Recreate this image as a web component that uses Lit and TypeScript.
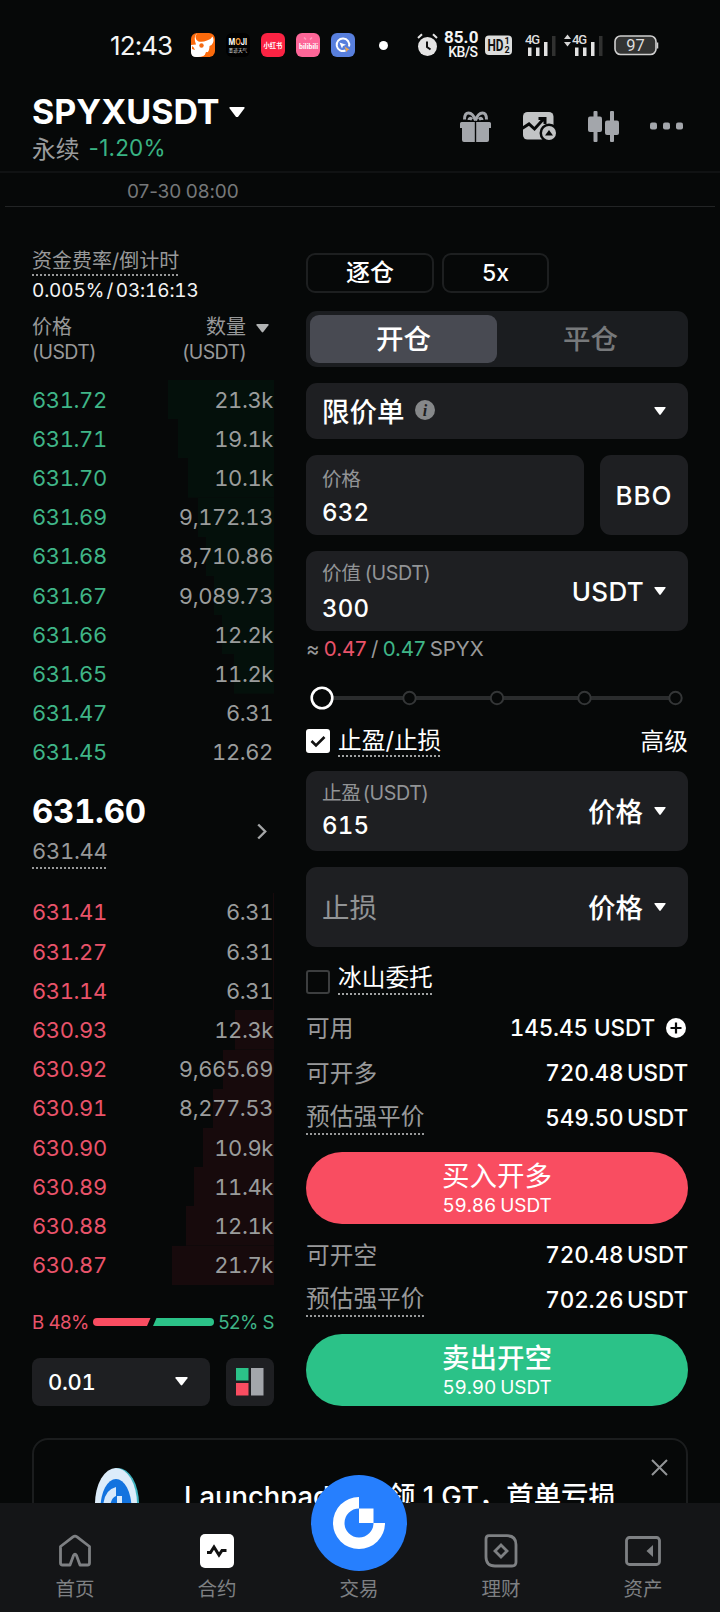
import { LitElement, html, css, svg, nothing } from "lit";
import { customElement, property } from "lit/decorators.js";
import { styleMap } from "lit/directives/style-map.js";

const shared = css`
  * { box-sizing: border-box; }
  svg { display: block; flex: none; }
  .row { display: flex; align-items: center; }
  .between { display: flex; align-items: center; justify-content: space-between; }
  .dotted {
    padding-bottom: 2px;
    background: repeating-linear-gradient(90deg, currentColor 0 2px, transparent 2px 4px) left bottom / 100% 2px no-repeat;
  }
`;

const caret = (w = 12, color = "#fff") => html`<svg width=${w} height=${w * 0.68} viewBox="0 0 12 8">
  <path d="M1 0h10q1.200 0 .5 1L6.700 7.400q-.7.8-1.400 0L.5 1Q-.2 0 1 0z" fill=${color} /></svg>`;

type Level = { price: string; qty: string; depth: number };

const asks: Level[] = [
  { price: "631.72", qty: "21.3k", depth: 106 },
  { price: "631.71", qty: "19.1k", depth: 96 },
  { price: "631.70", qty: "10.1k", depth: 86 },
  { price: "631.69", qty: "9,172.13", depth: 76 },
  { price: "631.68", qty: "8,710.86", depth: 68 },
  { price: "631.67", qty: "9,089.73", depth: 60 },
  { price: "631.66", qty: "12.2k", depth: 52 },
  { price: "631.65", qty: "11.2k", depth: 40 },
  { price: "631.47", qty: "6.31", depth: 0 },
  { price: "631.45", qty: "12.62", depth: 0 },
];

const bids: Level[] = [
  { price: "631.41", qty: "6.31", depth: 1 },
  { price: "631.27", qty: "6.31", depth: 1 },
  { price: "631.14", qty: "6.31", depth: 1 },
  { price: "630.93", qty: "12.3k", depth: 39 },
  { price: "630.92", qty: "9,665.69", depth: 51 },
  { price: "630.91", qty: "8,277.53", depth: 61 },
  { price: "630.90", qty: "10.9k", depth: 71 },
  { price: "630.89", qty: "11.4k", depth: 80 },
  { price: "630.88", qty: "12.1k", depth: 88 },
  { price: "630.87", qty: "21.7k", depth: 102 },
];

@customElement("status-bar")
class StatusBar extends LitElement {
  static styles = [shared, css`
    :host { display: flex; align-items: center; height: 90px; padding-left: 110px; color: #f4f4f4; font-family: Roboto, "Noto Sans CJK SC", sans-serif; }
    .time { width: 81px; font-size: 26px; font-weight: 400; letter-spacing: -0.900px; font-family: Inter, sans-serif; }
    .apps { display: flex; gap: 11px; width: 187.500px; flex: none; }
    .dot { width: 9px; height: 9px; border-radius: 50%; background: #fff; margin-right: 29px; flex: none; }
    .speed { width: 35px; margin-left: 6px; flex: none; display: flex; flex-direction: column; align-items: flex-end; font-size: 17px; line-height: 13.500px; font-weight: 700; white-space: nowrap; letter-spacing: 0.100px; }
    .speed b { font-size: 14px; line-height: 14px; font-weight: 500; letter-spacing: -0.600px; padding-right: 1px; }
    .hd { margin-left: 6px; }
    .sig { margin-left: 12px; }
    .sig2 { margin-left: 7px; }
    .bat { margin-left: 10px; }
  `];
  render() {
    return html`
      <span class="time">12:43</span>
      <div class="apps">
        <svg width="24" height="24"><rect width="24" height="24" rx="6" fill="#fb6a0c"/><path d="M6 0Q2.500 6 7.500 8.500q4 1 8.500-1 4-1 5.500-4Q24 8 20.500 12l-2 1q0 5-2.500 7-3 4-9 4H5q-5 0-5-5v-7l5-.5Q2 4 6 0z" fill="#fff"/><circle cx="10.500" cy="12.500" r="2.200" fill="#f46a12"/><path d="M1 13q2 1 3 4l-3-1zM15 19q4 0 4 5h-6z" fill="#fb6a0c"/></svg>
        <svg width="24" height="24"><rect width="24" height="24" rx="6" fill="#000"/><text x="2.500" y="12" font-size="8.500" font-weight="700" fill="#fff" font-family="Inter" textLength="18.500" lengthAdjust="spacingAndGlyphs">M<tspan fill="#f49b3b">O</tspan>JI</text><text x="2.500" y="18.500" font-size="4.700" fill="#ddd" font-family="Noto Sans CJK SC">墨迹天气</text></svg>
        <svg width="24" height="24"><rect width="24" height="24" rx="6" fill="#fb2343"/><text x="2.500" y="14.500" font-size="6.300" font-weight="700" fill="#fff" font-family="Noto Sans CJK SC">小红书</text></svg>
        <svg width="24" height="24"><rect width="24" height="24" rx="6" fill="#fd6698"/><path d="M8 4.500l2 2M16 4.500l-2 2" stroke="#ff9dbd" stroke-width="1.500"/><text x="3" y="15.500" font-size="7" font-weight="700" fill="#fff" font-family="Roboto">bilibili</text></svg>
        <svg width="24" height="24"><rect width="24" height="24" rx="6" fill="#587fdd"/><path d="M14.500 17.500a6.300 6.300 0 113.500-4" fill="none" stroke="#fff" stroke-width="2"/><path d="M8.500 9.500l6.500 2.200-3 1.300-1 2.500z" fill="#fff"/><path d="M13.500 13.500l5 3-2 .8-.8 2z" fill="#eda651"/></svg>
      </div>
      <i class="dot"></i>
      <svg width="21" height="24" viewBox="0 0 21 24"><circle cx="10.500" cy="13.500" r="9.500" fill="#e4e4e4"/><path d="M1 5l4-3.800M20 5l-4-3.800" stroke="#e4e4e4" stroke-width="2"/><path d="M10 8.500v5.500l3.500 2.500" fill="none" stroke="#111" stroke-width="2"/></svg>
      <span class="speed">85.0<b>KB/S</b></span>
      <svg class="hd" width="28" height="20"><rect width="27" height="19.500" y=".5" rx="4" fill="#dcdddc"/><text x="2.500" y="16" font-size="16" font-weight="700" textLength="16" lengthAdjust="spacingAndGlyphs" fill="#111" font-family="Roboto">HD</text><text x="19.500" y="9.300" font-size="9" font-weight="700" fill="#111" font-family="Roboto">1</text><text x="19.500" y="18.200" font-size="9" font-weight="700" fill="#111" font-family="Roboto">2</text></svg>
      ${[0, 1].map((i) => html`<svg class=${i ? "sig2" : "sig"} width=${i ? 40 : 32} height="24" viewBox="${i ? -8 : 0} 0 ${i ? 40 : 32} 24">
        ${i ? svg`<path d="M-8 6l3.500-4.500L-1 6zM-8 9l3.500 4.500L-1 9z" fill="#d4d4d4"/>` : nothing}
        <text x="0" y="11" font-size="13" font-weight="500" fill="#ddd" font-family="Roboto" textLength="15">4G</text>
        <path d="M3 14.500h3.500V23H3zM11 14.500h3.500V23H11zM19 9h3.500v14H19z" fill="#e2e2e2"/><path d="M27 3h3.500v20H27z" fill="#303130"/></svg>`)}
      <svg class="bat" width="45" height="21"><rect x="1" y="1" width="41" height="18.500" rx="5.500" fill="#333433" stroke="#d0d0d0" stroke-width="1.600"/><path d="M43.500 7.500v6" stroke="#d0d0d0" stroke-width="1.500"/><text x="21.500" y="16" text-anchor="middle" font-size="16.500" fill="#ddd" font-family="Roboto">97</text></svg>
    `;
  }
}

@customElement("pair-header")
class PairHeader extends LitElement {
  static styles = [shared, css`
    :host { display: flex; justify-content: space-between; height: 83px; padding: 3px 37px 0 32px; border-bottom: 2px solid #101213; }
    .name { height: 38px; gap: 9px; font-size: 34px; line-height: 38px; font-weight: 700; color: #fff; }
    .sub { height: 32px; gap: 9px; font-size: 23.800px; color: #9a9c9d; }
    .chg { color: #39b383; font-size: 22.500px; letter-spacing: 0.200px; }
    .tools { display: flex; gap: 31px; align-items: center; height: 66px; }
  `];
  render() {
    return html`
      <div>
        <div class="row name">SPYXUSDT ${caret(16)}</div>
        <div class="row sub">永续 <span class="chg">-1.20%</span></div>
      </div>
      <div class="tools">
        <svg width="31" height="31" viewBox="0 0 31 31" fill="#a3a6ab"><path d="M1.500 11h28q1.500 0 1.500 1.500V17h-2v12q0 2-2 2H4q-2 0-2-2V17H0v-4.500Q0 11 1.500 11z"/><path d="M14.800 11h1.400v20h-1.400z" fill="#060808"/><path d="M15.500 9.500Q13 2 8.500 2 4.500 2 4.500 8.500M15.500 9.500Q18 2 22.500 2q4 0 4 6.500M9 9q0-3 3-.5M22 9q0-3-3-.5" fill="none" stroke="#a3a6ab" stroke-width="3"/></svg>
        <svg width="35" height="30" viewBox="0 0 35 30"><rect width="30.500" height="27.500" x="1" y="1" rx="4.500" fill="#c2c4c5"/><path d="M0 17.500l7-4.500 5.500 5L22 7.500m-5.500 0h6.500V13" fill="none" stroke="#060808" stroke-width="3"/><circle cx="27" cy="22" r="9.500" fill="#060808"/><circle cx="27" cy="22" r="7" fill="#c2c4c5"/><path d="M23 24.500l4-5.500 4 5.500z" fill="#060808"/></svg>
        <svg width="31" height="31" viewBox="0 0 31 31" fill="#a3a6ab"><rect x="5.500" width="4" height="31" rx="1"/><rect y="5.500" width="14" height="15.500" rx="2"/><rect x="22" width="4" height="31" rx="1"/><rect x="17" y="9.500" width="14" height="14.500" rx="2"/></svg>
        <svg width="33" height="8" viewBox="0 0 33 8" fill="#a3a6ab"><rect y=".5" width="7" height="7" rx="2"/><rect x="13" y=".5" width="7" height="7" rx="2"/><rect x="26" y=".5" width="7" height="7" rx="2"/></svg>
      </div>`;
  }
}

@customElement("order-book")
class OrderBook extends LitElement {
  static styles = [shared, css`
    :host { display: block; width: 242px; color: #98999a; }
    .funding { width: max-content; height: 28px; font-size: 20px; line-height: 26px; }
    .rate { height: 29px; line-height: 29px; font-size: 19px; color: #f4f4f4; letter-spacing: -0.150px; word-spacing: -2.500px; font-variant-numeric: tabular-nums; white-space: nowrap; }
    .heads { height: 75px; padding-top: 10px; font-size: 20px; align-items: flex-start; }
    .heads div { line-height: 25px; }
    .heads small { display: block; font-size: 19.500px; letter-spacing: -0.600px; }
    .qh { text-align: right; padding-right: 28px; }
    .qt { position: relative; }
    .qt svg { position: absolute; left: 100%; top: 9px; margin-left: 10px; }
    .levels { display: grid; grid-auto-rows: 39.200px; font-size: 22px; font-variant-numeric: tabular-nums; }
    .level { display: grid; grid-template-columns: 1fr auto; align-items: center; padding-right: 1px; letter-spacing: -0.400px; background: linear-gradient(var(--tint), var(--tint)) right / var(--depth, 0) 100% no-repeat; }
    .ask { color: #3fb587; --tint: #04100b; }
    .bid { color: #e9536a; --tint: #170a0c; }
    .qty { color: #9a9c9c; }
    .mid { height: 121px; padding: 20px 7px 0 0; align-items: flex-start; }
    .last { font-size: 33px; line-height: 38px; font-weight: 700; color: #fff; font-variant-numeric: tabular-nums; letter-spacing: -0.300px; }
    .mark { width: max-content; margin-top: 3px; height: 36px; font-size: 22px; line-height: 36px; font-variant-numeric: tabular-nums; letter-spacing: -0.300px; }
    .arrow { margin-top: 31px; }
    .ratio { height: 73px; padding-top: 2px; justify-content: space-between; font-size: 18.700px; letter-spacing: -0.500px; white-space: nowrap; }
    .b { color: #e9536a; } .s { color: #3fb587; }
    .tools { display: flex; gap: 16px; height: 48px; }
    .step { flex: 1; border-radius: 8px; background: #1e1f22; padding: 0 22px 0 16px; color: #fff; font-size: 22px; font-weight: 500; font-variant-numeric: tabular-nums; letter-spacing: -0.300px; }
    .layout { width: 48px; border-radius: 8px; background: #1e1f22; display: grid; place-items: center; }
  `];
  private levels(rows: Level[], side: string) {
    return html`<div class="levels">${rows.map((l) => html`
      <div class="level ${side}" style=${styleMap({ "--depth": `${l.depth}px` })}><span>${l.price}</span><span class="qty">${l.qty}</span></div>`)}</div>`;
  }
  render() {
    return html`
      <div class="funding dotted">资金费率/倒计时</div>
      <div class="rate">0.005% / 03:16:13</div>
      <div class="between heads">
        <div>价格<small>(USDT)</small></div>
        <div class="qh"><span class="qt">数量${caret(13, "#b0b2b3")}</span><small>(USDT)</small></div>
      </div>
      ${this.levels(asks, "ask")}
      <div class="between mid">
        <div><div class="last">631.60</div><div class="mark dotted">631.44</div></div>
        <svg class="arrow" width="10" height="17" viewBox="0 0 10 17"><path d="M1.200 1.500l7 7-7 7" fill="none" stroke="#a4a6a7" stroke-width="2.400"/></svg>
      </div>
      ${this.levels(bids, "bid")}
      <div class="row ratio">
        <span class="b">B 48%</span>
        <svg width="121" height="8" viewBox="0 0 121 8"><path d="M4 0h53.500L54 8H4a4 4 0 010-8z" fill="#f94d61"/><path d="M63.500 0H117a4 4 0 010 8H60z" fill="#2bc288"/></svg>
        <span class="s">52% S</span>
      </div>
      <div class="tools">
        <div class="between step">0.01 ${caret(13)}</div>
        <div class="layout"><svg width="28" height="28"><rect width="12.500" height="12.500" fill="#2bc288"/><rect y="15" width="12.500" height="12.500" fill="#f94d61"/><rect x="15" width="12.500" height="27.500" fill="#a3a6ab"/></svg></div>
      </div>`;
  }
}

@customElement("order-field")
class OrderField extends LitElement {
  @property() label = "";
  @property() value = "";
  @property() hint = "";
  @property() unit = "";
  @property({ type: Number }) gap = 0;
  static styles = [shared, css`
    :host { display: flex; align-items: center; justify-content: space-between; height: 80px; border-radius: 11px; background: #1e1f22; padding: 0 22px 0 16px; color: #fff; }
    :host([lower]) .text { padding-top: 3px; }
    :host([upper]) .text { padding-bottom: 2px; }
    :host([upper]) .label { word-spacing: -3px; }
    .label { font-size: 19.700px; line-height: 26px; color: #929496; letter-spacing: -0.400px; word-spacing: -1px; }
    .value { font-size: 24px; line-height: 28px; font-weight: 500; font-variant-numeric: tabular-nums; letter-spacing: 0.200px; }
    .hint { font-size: 27.500px; color: #929496; padding-bottom: 2px; }
    .unit { gap: 10px; font-size: 26px; font-weight: 500; letter-spacing: 0.300px; padding-top: 1px; }
    .cjk { font-size: 27.500px; letter-spacing: 0; gap: 11px; padding: 0 0 2px; }
    .cjk svg { margin-top: 3px; }
  `];
  render() {
    return html`
      ${this.hint ? html`<div class="hint">${this.hint}</div>`
        : html`<div class="text"><div class="label">${this.label}</div><div class="value" style=${styleMap({ "margin-top": `${this.gap}px` })}>${this.value}</div></div>`}
      ${this.unit ? html`<div class="row unit ${this.unit === "USDT" ? "" : "cjk"}">${this.unit} ${caret(12)}</div>` : nothing}`;
  }
}

@customElement("order-form")
class OrderForm extends LitElement {
  static styles = [shared, css`
    :host { display: block; flex: 1; color: #fff; }
    .modes { display: flex; gap: 8px; }
    .mode { height: 40px; width: 128px; border: 2px solid #1d1f20; border-radius: 9px; display: grid; place-items: center; font-size: 24px; font-weight: 500; line-height: 30px; }
    .lev { width: 107px; font-size: 23px; }
    .tabs { display: grid; grid-template-columns: 187px 1fr; margin-top: 18px; height: 56px; padding: 4px; border-radius: 11px; background: #1b1d20; text-align: center; font-size: 27.500px; line-height: 49px; font-weight: 500; color: #77797b; }
    .on { background: #484a52; border-radius: 9px; color: #fff; height: 48px; }
    .type { margin-top: 16px; height: 56px; border-radius: 11px; background: #1e1f22; padding: 0 22px 0 16px; font-size: 27.500px; font-weight: 500; }
    .type .row { gap: 10px; padding-bottom: 2px; }
    .type > svg { margin-top: 1px; }
    .price { display: grid; grid-template-columns: 278px 88px; gap: 16px; margin-top: 16px; }
    .bbo { border-radius: 11px; background: #1e1f22; display: grid; place-items: center; font-size: 26px; font-weight: 500; letter-spacing: 0.900px; padding-top: 1px; }
    .mt { margin-top: 16px; }
    .est { height: 36px; font-size: 20.500px; line-height: 36px; color: #98999a; letter-spacing: -0.100px; word-spacing: -1.300px; }
    .r { color: #e9536a; } .g { color: #3fb587; }
    .slider { padding: 18px 0 0 4px; }
    .check { height: 60px; font-size: 23.700px; line-height: 33px; align-items: flex-start; padding-top: 14px; }
    .check .row { gap: 8px; align-items: flex-start; }
    .check .dotted { color: #fff; padding-bottom: 0; height: 32px; line-height: 32px; background-image: repeating-linear-gradient(90deg, #a0a2a3 0 2px, transparent 2px 4px); }
    .check svg, .box { margin-top: 4px; }
    .box { width: 24px; height: 24px; border: 2px solid #3c3e3f; border-radius: 3px; }
    .ice { height: 58px; padding-top: 16px; }
    .ice .dotted { line-height: 30px; }
    .ice .box { margin-top: 7px; }
    .info { height: 45px; font-size: 22.500px; font-weight: 500; font-variant-numeric: tabular-nums; word-spacing: -2.500px; letter-spacing: -0.100px; }
    .info > span:first-child { color: #98999a; font-size: 23.700px; font-weight: 400; letter-spacing: 0; padding-bottom: 2px; }
    .info .dotted { height: 34px; line-height: 32px; margin-top: 1px; }
    .avail { word-spacing: 0; }
    .avail div { gap: 11px; }
    .avail svg { margin-right: 2px; }
    .cta { height: 72px; border-radius: 36px; display: flex; flex-direction: column; align-items: center; font-size: 27.500px; line-height: 34px; padding-top: 7px; }
    .cta small { font-size: 19px; line-height: 25px; font-variant-numeric: tabular-nums; letter-spacing: -0.100px; word-spacing: -1px; }
    .buy { background: #f94d61; margin: 12px 0 8px; }
    .sell { background: #2bc288; margin-top: 12px; font-weight: 500; }
    .sell small { font-weight: 400; }
  `];
  private info(label: string, value: string, dotted = false) {
    return html`<div class="between info"><span class=${dotted ? "dotted" : ""}>${label}</span><span>${value}</span></div>`;
  }
  render() {
    return html`
      <div class="modes"><div class="mode">逐仓</div><div class="mode lev">5x</div></div>
      <div class="tabs"><div class="on">开仓</div><div>平仓</div></div>
      <div class="between type"><div class="row">限价单 <svg width="20" height="20"><circle cx="10" cy="10" r="10" fill="#86888a"/><text x="10" y="15.500" text-anchor="middle" font-family="Liberation Serif" font-style="italic" font-weight="700" font-size="16" fill="#1e1f22">i</text></svg></div>${caret(12)}</div>
      <div class="price"><order-field lower label="价格" value="632" .gap=${7}></order-field><div class="bbo">BBO</div></div>
      <order-field class="mt" label="价值 (USDT)" value="300" unit="USDT" .gap=${9}></order-field>
      <div class="est">≈ <span class="r">0.47</span> / <span class="g">0.47</span> SPYX</div>
      <svg class="slider" width="382" height="44" viewBox="0 0 378 26">
        <path d="M22 13H360" stroke="#2a2c2d" stroke-width="4"/>
        ${[99.5, 187, 274.5, 365.5].map((cx) => svg`<circle cx=${cx} cy="13" r="6.200" fill="#060808" stroke="#343637" stroke-width="2"/>`)}
        <circle cx="12" cy="13" r="10.300" fill="#060808" stroke="#fff" stroke-width="2.600"/>
      </svg>
      <div class="between check">
        <div class="row"><svg width="24" height="24"><rect width="24" height="24" rx="3" fill="#fff"/><path d="M5.500 12l4.500 4.500 8.500-8.500" fill="none" stroke="#111" stroke-width="2.600"/></svg><span class="dotted">止盈/止损</span></div>
        <span>高级</span>
      </div>
      <order-field upper label="止盈 (USDT)" value="615" unit="价格" .gap=${6}></order-field>
      <order-field class="mt" hint="止损" unit="价格"></order-field>
      <div class="check ice"><div class="row"><div class="box"></div><span class="dotted">冰山委托</span></div></div>
      <div class="between info avail"><span>可用</span><div class="row">145.45 USDT <svg width="20" height="20"><circle cx="10" cy="10" r="10" fill="#fff"/><path d="M10 4.500v11M4.500 10h11" stroke="#08090a" stroke-width="2.200"/></svg></div></div>
      ${this.info("可开多", "720.48 USDT")}
      ${this.info("预估强平价", "549.50 USDT", true)}
      <div class="cta buy">买入开多<small>59.86 USDT</small></div>
      ${this.info("可开空", "720.48 USDT")}
      ${this.info("预估强平价", "702.26 USDT", true)}
      <div class="cta sell">卖出开空<small>59.90 USDT</small></div>`;
  }
}

@customElement("promo-banner")
class PromoBanner extends LitElement {
  static styles = [shared, css`
    :host { display: grid; grid-template-columns: 62px auto 1fr; height: 110px; margin: 32px 32px 0; border: 2px solid #1b1d1e; border-radius: 16px; color: #fff; padding: 0 18px 0 61px; }
    .coin { margin-top: 28px; }
    .msg { padding: 38px 0 0 27px; font-size: 27.400px; line-height: 36px; font-weight: 500; white-space: nowrap; }
    .gt { margin-left: 58px; }
    .x { justify-self: end; margin-top: 19px; }
  `];
  render() {
    return html`
      <svg class="coin" width="44" height="72" viewBox="0 0 44 72"><ellipse cx="23" cy="36" rx="21" ry="36" fill="#3fb3c0"/><ellipse cx="21" cy="36" rx="21" ry="36" fill="#dcecfa"/><ellipse cx="21" cy="40" rx="15.500" ry="29" fill="#1273df"/><path d="M21 19v9q-6 2-6 14h-7q0-20 13-23zM22 28h5v16h-5z" fill="#d7e9fb"/></svg>
      <div class="msg"><span>Launchpad</span><span class="gt">领 1 GT，首单亏损</span></div>
      <svg class="x" width="17" height="17"><path d="M1 1l15 15M16 1L1 16" stroke="#929496" stroke-width="2"/></svg>`;
  }
}

@customElement("tab-bar")
class TabBar extends LitElement {
  static styles = [shared, css`
    :host { display: grid; grid-template-columns: repeat(5, 142px); justify-content: center; padding-right: 2px; height: 109px; background: #141517; color: #7e8083; font-size: 19.500px; text-align: center; }
    .tab { display: grid; grid-template-rows: 34px 26px; row-gap: 7.500px; padding-top: 31px; justify-items: center; line-height: 26px; }
    .tab svg { align-self: center; }
    .hub svg { position: relative; top: -28px; }
  `];
  render() {
    const tabs: [string, unknown, string][] = [
      ["首页", html`<svg width="34" height="34" fill="none" stroke="#7e8083" stroke-width="2.800" stroke-linejoin="round"><path d="M2.500 12.500L15 2.800q2-1.400 4 0l12.500 9.700V29q0 2-2 2h-7.500l-3.500-9.500q-1.500-2.500-3 0L12 31H4.500q-2 0-2-2z"/></svg>`, ""],
      ["合约", html`<svg width="34" height="34"><rect width="34" height="34" rx="5" fill="#fff"/><path d="M7 18.500h3.500l3.500-5.500 5 8 3-4.500h4.500" fill="none" stroke="#111" stroke-width="3"/></svg>`, ""],
      ["交易", html`<svg width="96" height="96" viewBox="-48 -48 96 96"><circle r="48" fill="#267ffe"/><path d="M0-26A26 26 0 1026 0H14.500A14.500 14.500 0 110-14.500z" fill="#fff"/><path d="M0-14.500h14.500V0H0z" fill="#fff"/></svg>`, "hub"],
      ["理财", html`<svg width="34" height="34" fill="none" stroke="#7e8083" stroke-width="2.800"><path d="M5 1.700h18q9 0 9 9V28q0 4-4 4H11q-9 0-9-9V5q0-3.300 3-3.300z"/><path d="M17 11l6 6-6 6-6-6z"/></svg>`, ""],
      ["资产", html`<svg width="36" height="30" fill="none" stroke="#7e8083" stroke-width="2.800"><rect x="1.500" y="1.500" width="33" height="27" rx="3"/><path d="M28 9v12l-6.500-6z" fill="#7e8083" stroke="none"/></svg>`, ""],
    ];
    return html`${tabs.map(([name, icon, cls]) => html`<div class="tab ${cls}">${icon}<span>${name}</span></div>`)}`;
  }
}

@customElement("app-root")
class AppRoot extends LitElement {
  static styles = [shared, css`
    :host { display: flex; flex-direction: column; width: 720px; height: 1612px; overflow: hidden; background: #060808; font-family: Inter, "Noto Sans CJK SC", sans-serif; }
    .axis { height: 34px; margin: 0 5px; padding-left: 122px; line-height: 37px; font-size: 19px; letter-spacing: -0.100px; word-spacing: -0.500px; color: #76787a; border-bottom: 1px solid #222425; }
    .main { display: flex; align-items: flex-start; gap: 32px; padding: 41px 32px 0; }
    .scroll { height: 1503px; overflow: hidden; flex: none; }
    order-book { flex: none; }
    order-form { padding-top: 5px; }
  `];
  render() {
    return html`
      <div class="scroll">
        <status-bar></status-bar>
        <pair-header></pair-header>
        <div class="axis">07-30 08:00</div>
        <div class="main"><order-book></order-book><order-form></order-form></div>
        <promo-banner></promo-banner>
      </div>
      <tab-bar></tab-bar>`;
  }
}
